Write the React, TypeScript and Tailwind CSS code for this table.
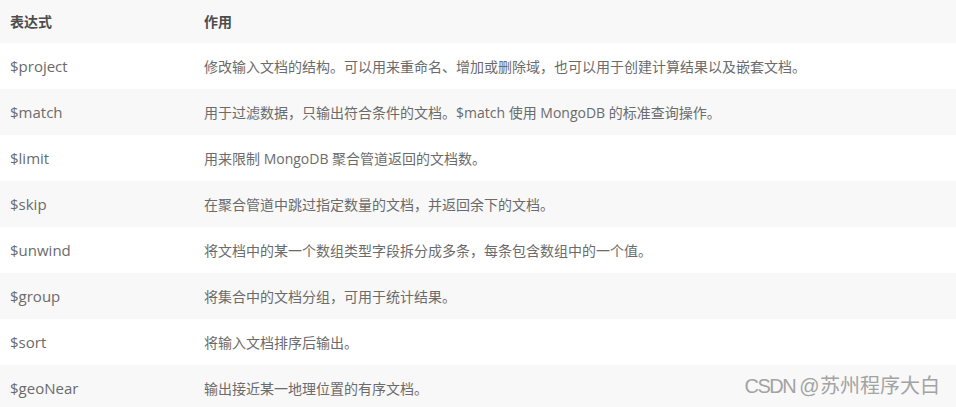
const rows: [string, string][] = [
  ['$project', '修改输入文档的结构。可以用来重命名、增加或删除域，也可以用于创建计算结果以及嵌套文档。'],
  ['$match', '用于过滤数据，只输出符合条件的文档。$match 使用 MongoDB 的标准查询操作。'],
  ['$limit', '用来限制 MongoDB 聚合管道返回的文档数。'],
  ['$skip', '在聚合管道中跳过指定数量的文档，并返回余下的文档。'],
  ['$unwind', '将文档中的某一个数组类型字段拆分成多条，每条包含数组中的一个值。'],
  ['$group', '将集合中的文档分组，可用于统计结果。'],
  ['$sort', '将输入文档排序后输出。'],
  ['$geoNear', '输出接近某一地理位置的有序文档。'],
]

const App = () => {
  return (
    <main className="relative w-full h-[407px] overflow-hidden bg-white font-['Segoe_UI','Open_Sans','Noto_Sans_CJK_SC',sans-serif]">
      {/* header */}
      <div className="flex items-center h-[43px] bg-[#f8f8f8] text-[#4d4d4d] text-[14px] font-bold">
        <div className="w-[194px] pl-[10px]">表达式</div>
        <div className="flex-1 pl-[10px]">作用</div>
      </div>

      {rows.map(([expr, desc], i) => (
        <div
          key={expr}
          className={i % 2 === 0 ? 'flex items-center h-[46px] bg-white' : 'flex items-center h-[46px] bg-[#f8f8f8]'}
        >
          <div className="w-[194px] pl-[10px] text-[15px] text-[#6b6b6b]">{expr}</div>
          <div className="flex-1 pl-[10px] text-[14px] text-[#6b6b6b]">{desc}</div>
        </div>
      ))}

      {/* watermark */}
      <div className="absolute right-[16px] bottom-[6px] text-[20px] text-[#a3a3a3] font-['Liberation_Sans','Noto_Sans_CJK_SC',sans-serif]">
        <span className="tracking-[-1.5px]">CSDN @</span>
        <span className="ml-[2px]">苏州程序大白</span>
      </div>
    </main>
  )
}

export default App
